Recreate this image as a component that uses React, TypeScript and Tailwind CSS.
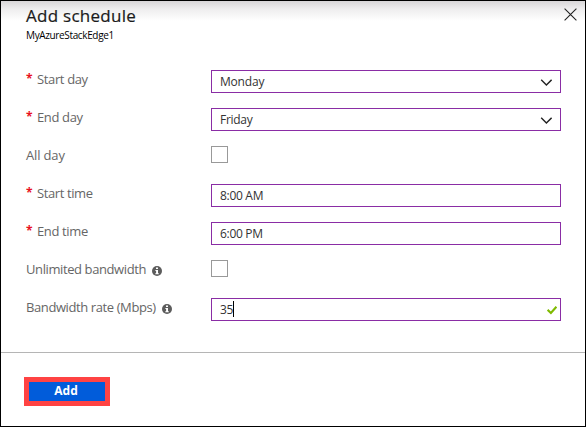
import React from "react";

type RowProps = {
  label: string;
  labelClass: string;
  required?: boolean;
  info?: boolean;
  children: React.ReactNode;
};

function InfoIcon() {
  return (
    <svg width="10" height="10" viewBox="0 0 10 10" className="mt-[6px] ml-[6px] shrink-0">
      <circle cx="5" cy="5" r="5" fill="#5c5c5c" />
      <rect x="4" y="1.5" width="2" height="1.5" fill="#fff" />
      <path d="M3.4 4H6V7.2H6.8V8.2H3.3V7.2H4.1V5H3.4Z" fill="#fff" />
    </svg>
  );
}

function Row({ label, labelClass, required, info, children }: RowProps) {
  return (
    <div className="flex h-[38px] items-start">
      <div className="flex w-[185px] shrink-0 items-start text-[13px] leading-[18px] text-[#666]">
        {required && <span className="w-[11px] text-[12px] font-bold leading-[18px] text-[#e81123]">*</span>}
        <span className={labelClass}>{label}</span>
        {info && <InfoIcon />}
      </div>
      {children}
    </div>
  );
}

function Field({ value, textClass, kind }: { value: string; textClass: string; kind?: "select" | "valid" }) {
  return (
    <div className="flex h-[23px] w-[350px] items-start border border-[#8a2da5] bg-white pl-2 text-[12px] leading-[18px] text-[#333]">
      <span className={textClass}>{value}</span>
      {kind === "valid" && <span className="mt-[2px] h-4 w-px bg-black" />}
      {kind === "select" && (
        <svg width="12" height="7" viewBox="0 0 12 7" className="mt-[8px] mr-[8px] ml-auto">
          <path d="M1.2 .8L6.4 6L11.6 .8" fill="none" stroke="#222" strokeWidth="1.4" />
        </svg>
      )}
      {kind === "valid" && (
        <svg width="10" height="9" viewBox="0 0 10 9" className="mt-[7px] mr-[3px] ml-auto">
          <path d="M.6 3.8L3.9 7L9.4 .8" fill="none" stroke="#7fba00" strokeWidth="2.1" />
        </svg>
      )}
    </div>
  );
}

function Checkbox() {
  return <div className="h-[17px] w-[17px] border border-[#999] bg-white" />;
}

export default function App() {
  return (
    <div className="relative flex h-[427px] w-[586px] flex-col overflow-hidden whitespace-nowrap border border-black bg-white font-['Open_Sans',sans-serif]">
      <header className="flex h-[69px] items-start justify-between bg-[linear-gradient(to_bottom,#d8d6d8_0px,#eeedee_8px,#fff_20px)] pr-[8px] pl-[25px]">
        <div>
          <h1 className="mt-[3px] text-[17px] leading-[23px] tracking-[0.27px] text-[#1b1b1b] [-webkit-text-stroke:0.2px_#1b1b1b]">Add schedule</h1>
          <p className="mt-[1px] text-[10px] leading-[14px] tracking-[-0.36px] text-black">MyAzureStackEdge1</p>
        </div>
        <svg width="13" height="13" viewBox="0 0 13 13" className="mt-[7px]">
          <path d="M.6 .6L12.4 12.4M12.4 .6L.6 12.4" stroke="#222" strokeWidth="1.1" />
        </svg>
      </header>
      <main className="h-[282px] pl-[25px]">
        <Row label="Start day" labelClass="tracking-[-0.36px]" required>
          <Field value="Monday" textClass="mt-[2px] tracking-[-0.2px]" kind="select" />
        </Row>
        <Row label="End day" labelClass="tracking-[-0.36px]" required>
          <Field value="Friday" textClass="mt-[2px] tracking-[-0.3px]" kind="select" />
        </Row>
        <Row label="All day" labelClass="tracking-[-0.15px]">
          <Checkbox />
        </Row>
        <Row label="Start time" labelClass="tracking-[-0.4px]" required>
          <Field value="8:00 AM" textClass="mt-[2px] tracking-[-0.3px]" />
        </Row>
        <Row label="End time" labelClass="tracking-[-0.36px]" required>
          <Field value="6:00 PM" textClass="mt-[2px] tracking-[-0.3px]" />
        </Row>
        <Row label="Unlimited bandwidth" labelClass="tracking-[-0.4px]" info>
          <Checkbox />
        </Row>
        <Row label="Bandwidth rate (Mbps)" labelClass="tracking-[-0.4px]" info>
          <Field value="35" textClass="mt-[2px] tracking-[-0.3px]" kind="valid" />
        </Row>
      </main>
      <footer className="grow border-t border-[#b5b5b5] pt-[24px] pl-[23px]">
        <button className="flex h-[29px] w-[86px] items-center justify-center border-[5px] border-[#ff4343] bg-[#015cda] pr-[2px] pb-[1px] text-[12px] leading-[18px] font-bold text-white">
          Add
        </button>
      </footer>
    </div>
  );
}
